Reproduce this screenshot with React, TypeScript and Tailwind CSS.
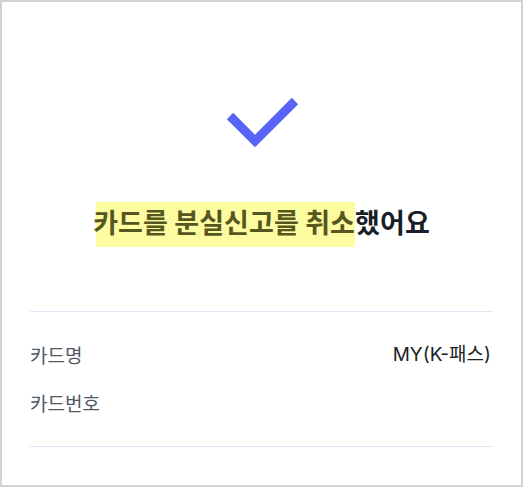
import React from "react";

export default function App() {
  const font = { fontFamily: '"Noto Sans CJK KR", "Noto Sans", sans-serif' };
  return (
    <div
      className="w-[523px] h-[487px] bg-white border-2 border-[#d3d3d3] box-border flex flex-col"
      style={font}
    >
      <div className="flex justify-center pt-[92px]">
        <svg width="82" height="56" viewBox="0 0 82 56" fill="none">
          <polyline
            points="9,22 34,47 74,7"
            stroke="#5964f7"
            strokeWidth="9"
            strokeLinecap="butt"
            strokeLinejoin="miter"
          />
        </svg>
      </div>
      <div className="flex justify-center mt-[52px]">
        <div className="flex h-[45px] leading-[40px] text-[27px] font-bold text-[#191f28] whitespace-nowrap tracking-[0.1px]">
          <span className="block h-[45px] text-[#56571e] bg-[linear-gradient(to_right,transparent_3px,#fdfca0_3px)]">
            카드를 분실신고를 취소
          </span>
          <span className="block h-[45px]">했어요</span>
        </div>
      </div>
      <div className="mx-[28px] mt-[64px] border-t-[1.5px] border-[#e2e5f5]" />
      <div className="mx-[28px] py-[30px] flex flex-col gap-[22px] text-[19px] leading-[26px]">
        <div className="flex justify-between">
          <span className="text-[#4e5968]">카드명</span>
          <span
            className="text-[#191f28] pr-[2px]"
            style={{ fontFamily: 'Inter, "Noto Sans CJK KR", sans-serif' }}
          >
            MY(K-패스)
          </span>
        </div>
        <div className="flex justify-between">
          <span className="text-[#4e5968]">카드번호</span>
          <span className="text-[#191f28]"></span>
        </div>
      </div>
      <div className="mx-[28px] border-t-[1.5px] border-[#e2e5f5]" />
    </div>
  );
}
